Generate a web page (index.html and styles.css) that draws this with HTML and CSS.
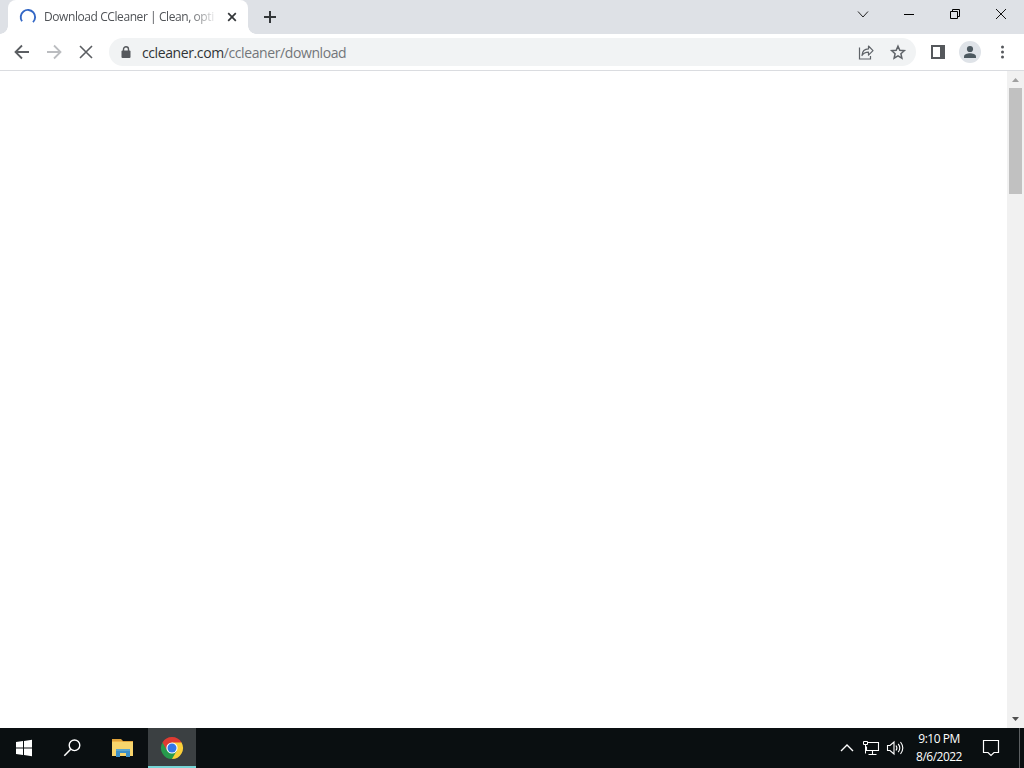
FILE: index.html
```html
<!DOCTYPE html>
<html lang="en">
<head>
<meta charset="UTF-8" />
<meta name="viewport" content="width=device-width, initial-scale=1" />
<title>Download CCleaner | Clean, optimize</title>
<link rel="stylesheet" href="styles.css">
</head>
<body>

<header class="tabstrip">
  <div class="tab">
    <svg class="spinner" width="18" height="18" viewBox="0 0 18 18"><path d="M3 13.200A7.200 7.200 0 1 1 14 14.200" fill="none" stroke="#3367c5" stroke-width="1.900"/></svg>
    <span class="tab-title">Download CCleaner | Clean, opti</span>
    <svg class="tab-close" width="10" height="10" viewBox="0 0 10 10"><path d="M1.200 1.200l7.600 7.600M8.800 1.200L1.200 8.800" stroke="#333639" stroke-width="1.700"/></svg>
  </div>
  <svg class="new-tab" width="14" height="14" viewBox="0 0 14 14"><path d="M7 1v12M1 7h12" stroke="#333639" stroke-width="2"/></svg>
  <div class="window-buttons">
    <svg width="46" height="28" viewBox="0 0 46 28"><path d="M18 11.500l5 5.500 5-5.500" fill="none" stroke="#222"/></svg>
    <svg width="46" height="28" viewBox="0 0 46 28"><path d="M18 14.500h10" stroke="#000"/></svg>
    <svg width="46" height="28" viewBox="0 0 46 28"><path d="M18.500 11.500h7v7h-7zM20.500 11.500v-2h7v7h-2" fill="none" stroke="#000"/></svg>
    <svg width="46" height="28" viewBox="0 0 46 28"><path d="M18 9l10 10M28 9L18 19" stroke="#111"/></svg>
  </div>
</header>

<nav class="toolbar">
  <svg width="32" height="32" viewBox="0 0 32 32"><path d="M23 16H10M16 9.500L9.500 16l6.500 6.500" fill="none" stroke="#5b5e62" stroke-width="1.800"/></svg>
  <svg width="32" height="32" viewBox="0 0 32 32"><path d="M9 16h13M16 9.500l6.500 6.500-6.500 6.500" fill="none" stroke="#bbbdc0" stroke-width="1.800"/></svg>
  <svg width="32" height="32" viewBox="0 0 32 32"><path d="M10 10l12 12M22 10L10 22" stroke="#5b5e62" stroke-width="1.600"/></svg>
  <div class="address">
    <svg class="lock" width="10" height="13" viewBox="0 0 10 13"><rect x="0.500" y="4.500" width="9" height="7.500" rx="1" fill="#55585c"/><path d="M2.500 5V3.300a2.500 2.500 0 0 1 5 0V5" fill="none" stroke="#55585c" stroke-width="1.400"/></svg>
    <span class="url">ccleaner.com<span class="path">/ccleaner/download</span></span>
    <svg width="32" height="28" viewBox="0 0 32 28"><path d="M9.500 9.500v11.500h11v-3" fill="none" stroke="#5f6368" stroke-width="1.200"/><path d="M12 17.500c.3-4.500 2.800-6.600 6.500-6.600V8l4.500 4.600-4.500 4.600v-3c-3 0-5 .8-6.500 3.300z" fill="none" stroke="#5f6368" stroke-width="1.200" stroke-linejoin="round"/></svg>
    <svg width="32" height="28" viewBox="0 0 32 28"><path d="M16 8.200l1.800 4.100 4.500.4-3.400 3 1 4.400-3.900-2.300-3.900 2.300 1-4.400-3.400-3 4.500-.4z" fill="none" stroke="#5f6368" stroke-width="1.500"/></svg>
  </div>
  <svg width="32" height="32" viewBox="0 0 32 32"><path d="M9 9h14v14H9zM11 11v10h7V11z" fill="#55585c" fill-rule="evenodd"/></svg>
  <svg width="32" height="32" viewBox="0 0 32 32"><circle cx="16" cy="16" r="11" fill="#dfe3e8"/><circle cx="16" cy="13" r="3.100" fill="#4d5960"/><path d="M10 22v-1.500c0-2.200 3.500-3.300 6-3.300s6 1.100 6 3.300V22z" fill="#4d5960"/></svg>
  <svg width="32" height="32" viewBox="0 0 32 32" fill="#55585c"><circle cx="16.500" cy="11" r="1.500"/><circle cx="16.500" cy="16" r="1.500"/><circle cx="16.500" cy="21" r="1.500"/></svg>
</nav>

<main class="page">
  <div class="scrollbar">
    <svg width="17" height="17" viewBox="0 0 17 17"><path d="M5 11l3.500-4 3.500 4z" fill="#a0a0a0"/></svg>
    <div class="thumb"></div>
    <svg width="17" height="17" viewBox="0 0 17 17"><path d="M5 6l3.500 4L12 6z" fill="#505050"/></svg>
  </div>
</main>

<footer class="taskbar">
  <div class="task">
    <svg width="48" height="40" viewBox="0 0 48 40"><path d="M16 14l7-1v6.500h-7zM24 12.900l8-1.100v7.700h-8zM16 20.500h7V27l-7-1zM24 20.500h8v7.700l-8-1.100z" fill="#fff"/></svg>
  </div>
  <div class="task">
    <svg width="48" height="40" viewBox="0 0 48 40"><circle cx="26.500" cy="17.300" r="5.300" fill="none" stroke="#fff" stroke-width="1.400"/><path d="M22.700 21.200L16.300 27.700" stroke="#fff" stroke-width="1.500"/></svg>
  </div>
  <div class="task">
    <svg width="48" height="40" viewBox="0 0 48 40"><path d="M16 11h9l2 2h10v4H16z" fill="#dfa23a"/><path d="M16 14h21v14H16z" fill="#f8d56c"/><path d="M16 14h10l1.500-1H16z" fill="#f2b84b"/><path d="M20 21h14v8h-4v-4h-6v4h-4z" fill="#3c8fc7"/><path d="M20 21h14v2H20z" fill="#5ba5cd"/></svg>
  </div>
  <div class="task active">
    <svg width="48" height="38" viewBox="0 0 48 38"><path d="M24 20L14.470 14.500A11 11 0 0 1 33.530 14.500z" fill="#df3b32"/><path d="M24 20L14.470 14.500A11 11 0 0 0 24 31z" fill="#279a4c"/><path d="M24 20L33.530 14.500A11 11 0 0 1 24 31z" fill="#fbcf39"/><path d="M24 14.500h9.530L28.760 22.750z" fill="#fbcf39"/><path d="M28.760 22.750L24 31 19.240 22.750z" fill="#279a4c"/><path d="M14.470 14.500l4.770 8.250L24 14.500z" fill="#df3b32"/><circle cx="24" cy="20" r="5.600" fill="#fff"/><circle cx="24" cy="20" r="4.500" fill="#3476e8"/></svg>
  </div>
  <div class="tray">
    <svg width="24" height="40" viewBox="0 0 24 40"><path d="M6 23l6-6 6 6" fill="none" stroke="#fff" stroke-width="1.400"/></svg>
    <svg width="24" height="40" viewBox="0 0 24 40"><path d="M9 14.500h10.500v8h-12v-4M13.500 22.500v3.500M9.500 26.500h8" fill="none" stroke="#fff" stroke-width="1.100"/><path d="M4.500 13.500h4v3h-4zM6.500 16.500v9" fill="none" stroke="#fff"/></svg>
    <svg width="24" height="40" viewBox="0 0 24 40"><path d="M4.500 17.500h2.500l4-3.500v12l-4-3.500H4.500z" fill="none" stroke="#fff" stroke-width="1.100"/><path d="M13 17.500q1.800 2.500 0 5M15.200 15.800q3.200 4.200 0 8.400M17.500 14q4.600 6 0 12" fill="none" stroke="#fff" stroke-width="1.100"/></svg>
    <div class="clock">
      <span>9:10 PM</span>
      <span class="date">8/6/2022</span>
    </div>
    <svg width="40" height="40" viewBox="0 0 40 40"><path d="M12.500 12.500h15v12h-4.500l-3 3-3-3h-4.500z" fill="none" stroke="#fff" stroke-width="1.200"/></svg>
    <div class="show-desktop"></div>
  </div>
</footer>

</body>
</html>
```
FILE: styles.css
```css
* {
  box-sizing: border-box;
}
body {
  margin: 0;
  width: 1024px;
  height: 768px;
  display: flex;
  flex-direction: column;
  overflow: hidden;
  background: #fff;
  font-family: "Open Sans", "Noto Sans", sans-serif;
}
svg {
  display: block;
  flex: none;
}
.tabstrip {
  height: 34px;
  flex: none;
  display: flex;
  padding-left: 8px;
  background: #dee1e6;
}
.tab {
  position: relative;
  width: 240px;
  height: 34px;
  display: flex;
  align-items: center;
  padding: 0 11px;
  background: #fff;
  border-radius: 8px 8px 0 0;
}
/* curved feet on both sides of the active tab */
.tab::before,
.tab::after {
  content: "";
  position: absolute;
  bottom: 0;
  width: 8px;
  height: 8px;
}
.tab::before {
  left: -8px;
  background: radial-gradient(circle at 0 0, transparent 7.5px, #fff 8px);
}
.tab::after {
  right: -8px;
  background: radial-gradient(circle at 100% 0, transparent 7.5px, #fff 8px);
}
.tab-title {
  width: 174px;
  margin: 0 9px 0 7px;
  white-space: nowrap;
  font-size: 12px;
  line-height: 18px;
  letter-spacing: -0.42px;
  color: #505357;
  -webkit-mask-image: linear-gradient(to right, #000 145px, transparent 174px);
  mask-image: linear-gradient(to right, #000 145px, transparent 174px);
}
.new-tab {
  margin: 10px 0 0 15px;
}
.window-buttons {
  display: flex;
  margin-left: auto;
}
.toolbar {
  height: 37px;
  flex: none;
  display: flex;
  align-items: center;
  padding: 0 6px;
  background: #fff;
  border-bottom: 1px solid #dadce0;
}
.address {
  flex: 1;
  height: 28px;
  display: flex;
  align-items: center;
  margin: 0 6px 0 7px;
  padding: 0 2px 0 12px;
  border-radius: 14px;
  background: #f1f3f4;
}
.url {
  flex: 1;
  margin-left: 11px;
  padding-top: 1px;
  font-size: 14px;
  line-height: 20px;
  letter-spacing: -0.4px;
  white-space: nowrap;
  color: #303336;
}
.path {
  color: #73767a;
}
.page {
  flex: 1;
  display: flex;
  justify-content: flex-end;
}
.scrollbar {
  width: 17px;
  display: flex;
  flex-direction: column;
  background: #f1f1f1;
}
.thumb {
  height: 106px;
  margin: 0 2px auto;
  background: #c1c1c1;
}
.taskbar {
  height: 40px;
  flex: none;
  display: flex;
  background: #0a0f11;
}
.task {
  width: 48px;
  height: 40px;
}
.task:nth-child(3) {
  margin-right: 4px;
}
.active {
  background: #3b4042;
  border-bottom: 2px solid #76d5d6;
}
.tray {
  display: flex;
  margin-left: auto;
}
.clock {
  width: 64px;
  margin-right: 0;
  display: flex;
  flex-direction: column;
  align-items: center;
  padding-top: 2px;
  font-size: 12px;
  line-height: 18px;
  letter-spacing: -0.5px;
  color: #fff;
}
.show-desktop {
  width: 5px;
  margin-left: 8px;
  border-left: 1px solid #5c6062;
}
```
